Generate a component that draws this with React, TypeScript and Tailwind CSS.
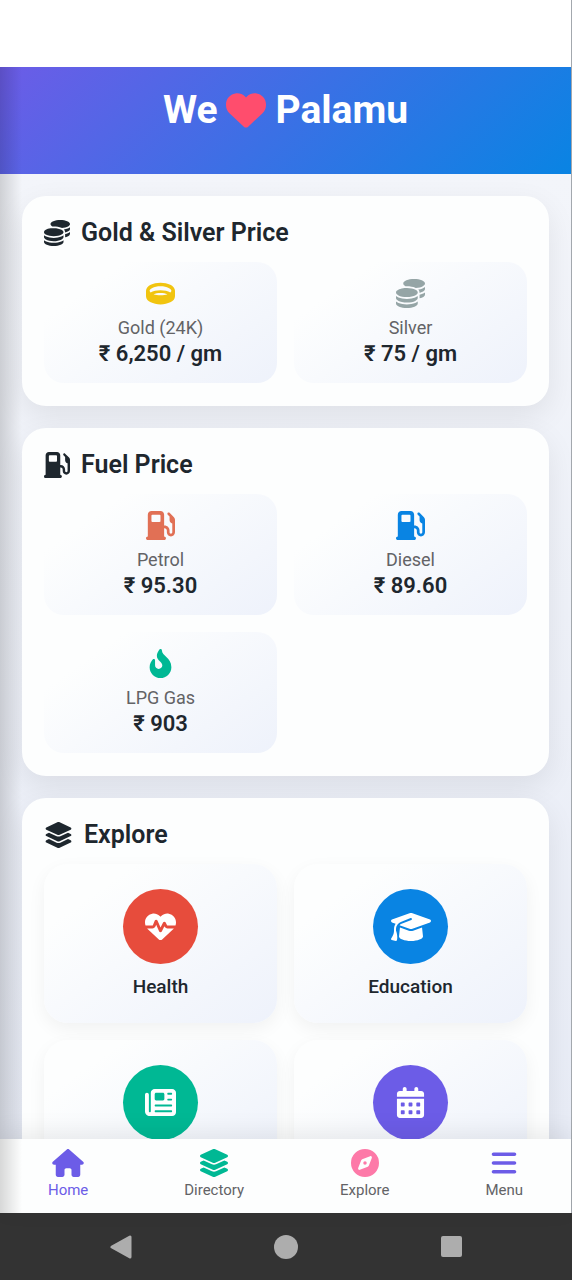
import { FaFire } from "react-icons/fa";
import type { IconType } from "react-icons";
import {
  FaBars,
  FaCalendarDays,
  FaCoins,
  FaCompass,
  FaGasPump,
  FaGraduationCap,
  FaHeart,
  FaHeartPulse,
  FaHouse,
  FaLayerGroup,
  FaNewspaper,
  FaRing,
} from "react-icons/fa6";
import { clsx } from "clsx";
import type { ReactNode } from "react";

type Item = {
  icon: IconType;
  label: string;
  color: string;
  value?: string;
  iconOnly?: boolean;
  size?: string;
};

const metals: Item[] = [
  { icon: FaRing, label: "Gold (24K)", value: "₹ 6,250 / gm", color: "text-[#f1c40f]" },
  { icon: FaCoins, label: "Silver", value: "₹ 75 / gm", color: "text-[#95a5a6]" },
];

const fuels: Item[] = [
  { icon: FaGasPump, label: "Petrol", value: "₹ 95.30", color: "text-[#e17055]" },
  { icon: FaGasPump, label: "Diesel", value: "₹ 89.60", color: "text-[#0984e3]" },
  { icon: FaFire, label: "LPG Gas", value: "₹ 903", color: "text-[#00b894]" },
];

const categories: Item[] = [
  { icon: FaHeartPulse, label: "Health", color: "bg-[#e74c3c]", size: "size-[31px]" },
  { icon: FaGraduationCap, label: "Education", color: "bg-[#0984e3]", size: "w-10 h-8" },
  { icon: FaNewspaper, label: "News", color: "bg-[#00b894]", size: "size-[31px]", iconOnly: true },
  { icon: FaCalendarDays, label: "Events", color: "bg-[#6c5ce7]", size: "size-[31px]", iconOnly: true },
];

const tabs: Item[] = [
  { icon: FaHouse, label: "Home", color: "text-[#6c5ce7]" },
  { icon: FaLayerGroup, label: "Directory", color: "text-[#00b894]" },
  { icon: FaCompass, label: "Explore", color: "text-[#fd79a8]" },
  { icon: FaBars, label: "Menu", color: "text-[#6c5ce7]" },
];

function Section({
  icon: Icon,
  iconSize = "size-[26px]",
  title,
  children,
}: {
  icon: IconType;
  iconSize?: string;
  title: string;
  children: ReactNode;
}) {
  return (
    <section className="rounded-3xl bg-[#fdfefe] px-[22px] pt-[22px] pb-[23px] shadow-[0_10px_30px_rgba(0,0,0,0.08)]">
      <h2 className="flex h-[30px] items-center gap-[11px] text-[25px] font-semibold">
        <Icon className={iconSize} />
        {title}
      </h2>
      <div className="mt-[14px] grid grid-cols-2 gap-[17px]">{children}</div>
    </section>
  );
}

function PriceTile({ icon: Icon, label, value, color }: Item) {
  return (
    <div className="flex flex-col items-center rounded-[20px] bg-[linear-gradient(145deg,#fdfefe_20%,#eef2fb)] pt-[17px] pb-[14px]">
      <Icon className={clsx("size-[29px]", color)} />
      <p className="mt-[9px] text-lg leading-[22px] text-[#636366]">{label}</p>
      <p className="text-[22px] leading-[30px] font-semibold">{value}</p>
    </div>
  );
}

function CategoryTile({ icon: Icon, label, color, size, iconOnly }: Item) {
  return (
    <a
      href="#"
      aria-label={label}
      className="flex flex-col items-center rounded-3xl bg-[linear-gradient(145deg,#fdfefe_20%,#eef2fb)] pt-[25px] pb-6 shadow-[0_6px_18px_rgba(0,0,0,0.05)]"
    >
      <span className={clsx("flex size-[75px] items-center justify-center rounded-full text-white", color)}>
        <Icon className={size} />
      </span>
      {!iconOnly && <span className="mt-[11px] text-[19px] leading-6 font-medium">{label}</span>}
    </a>
  );
}

export default function App() {
  return (
    <div className="flex h-screen flex-col bg-white font-[Roboto,sans-serif] text-[#1e272e]">
      <div className="relative flex min-h-0 flex-1 flex-col border-r border-[#a3a8ae] pt-[67px]">
        <header className="h-[107px] shrink-0 bg-[linear-gradient(135deg,#6c5ce7,#0984e3)] pt-[18px]">
          <h1 className="flex items-center justify-center gap-[9px] text-[39px] leading-[50px] font-bold text-white">
            We
            <FaHeart className="size-10 text-[#ff4d6d]" />
            Palamu
          </h1>
        </header>

        <main className="flex min-h-0 flex-1 flex-col gap-[22px] overflow-y-auto bg-[linear-gradient(#f3f5fa,#e8ecf6)] p-[22px] [scrollbar-width:none] [&>section]:shrink-0">
          <Section icon={FaCoins} title="Gold & Silver Price">
            {metals.map((item) => (
              <PriceTile key={item.label} {...item} />
            ))}
          </Section>
          <Section icon={FaGasPump} title="Fuel Price">
            {fuels.map((item) => (
              <PriceTile key={item.label} {...item} />
            ))}
          </Section>
          <Section icon={FaLayerGroup} iconSize="h-[26px] w-[29px]" title="Explore">
            {categories.map((item) => (
              <CategoryTile key={item.label} {...item} />
            ))}
          </Section>
        </main>

        <nav className="relative flex h-[74px] shrink-0 justify-around bg-[#fdfefe] pt-[10px] shadow-[0_-6px_24px_rgba(0,0,0,0.08)]">
          {tabs.map(({ icon: Icon, label, color }, i) => (
            <a
              key={label}
              href="#"
              className={clsx(
                "flex flex-col items-center gap-[3px] text-[15px] leading-5",
                i === 0 ? "text-[#6c5ce7]" : "text-[#636366]",
              )}
            >
              <Icon className={clsx("h-7 w-8", color)} />
              {label}
            </a>
          ))}
        </nav>

        <div className="pointer-events-none absolute top-[67px] bottom-0 left-0 w-[22px] bg-linear-to-r from-black/15 to-transparent" />
      </div>

      <div className="grid h-[67px] shrink-0 grid-cols-3 place-items-center bg-[#333] px-[38px] text-[#adadad]">
        <button aria-label="Back">
          <svg viewBox="0 0 24 24" className="size-6" fill="currentColor" stroke="currentColor" strokeWidth="3" strokeLinejoin="round">
            <path d="M21 2v20L3 12z" />
          </svg>
        </button>
        <button aria-label="Home" className="size-6 rounded-full bg-current" />
        <button aria-label="Recent apps" className="size-[21px] rounded-xs bg-current" />
      </div>
    </div>
  );
}
